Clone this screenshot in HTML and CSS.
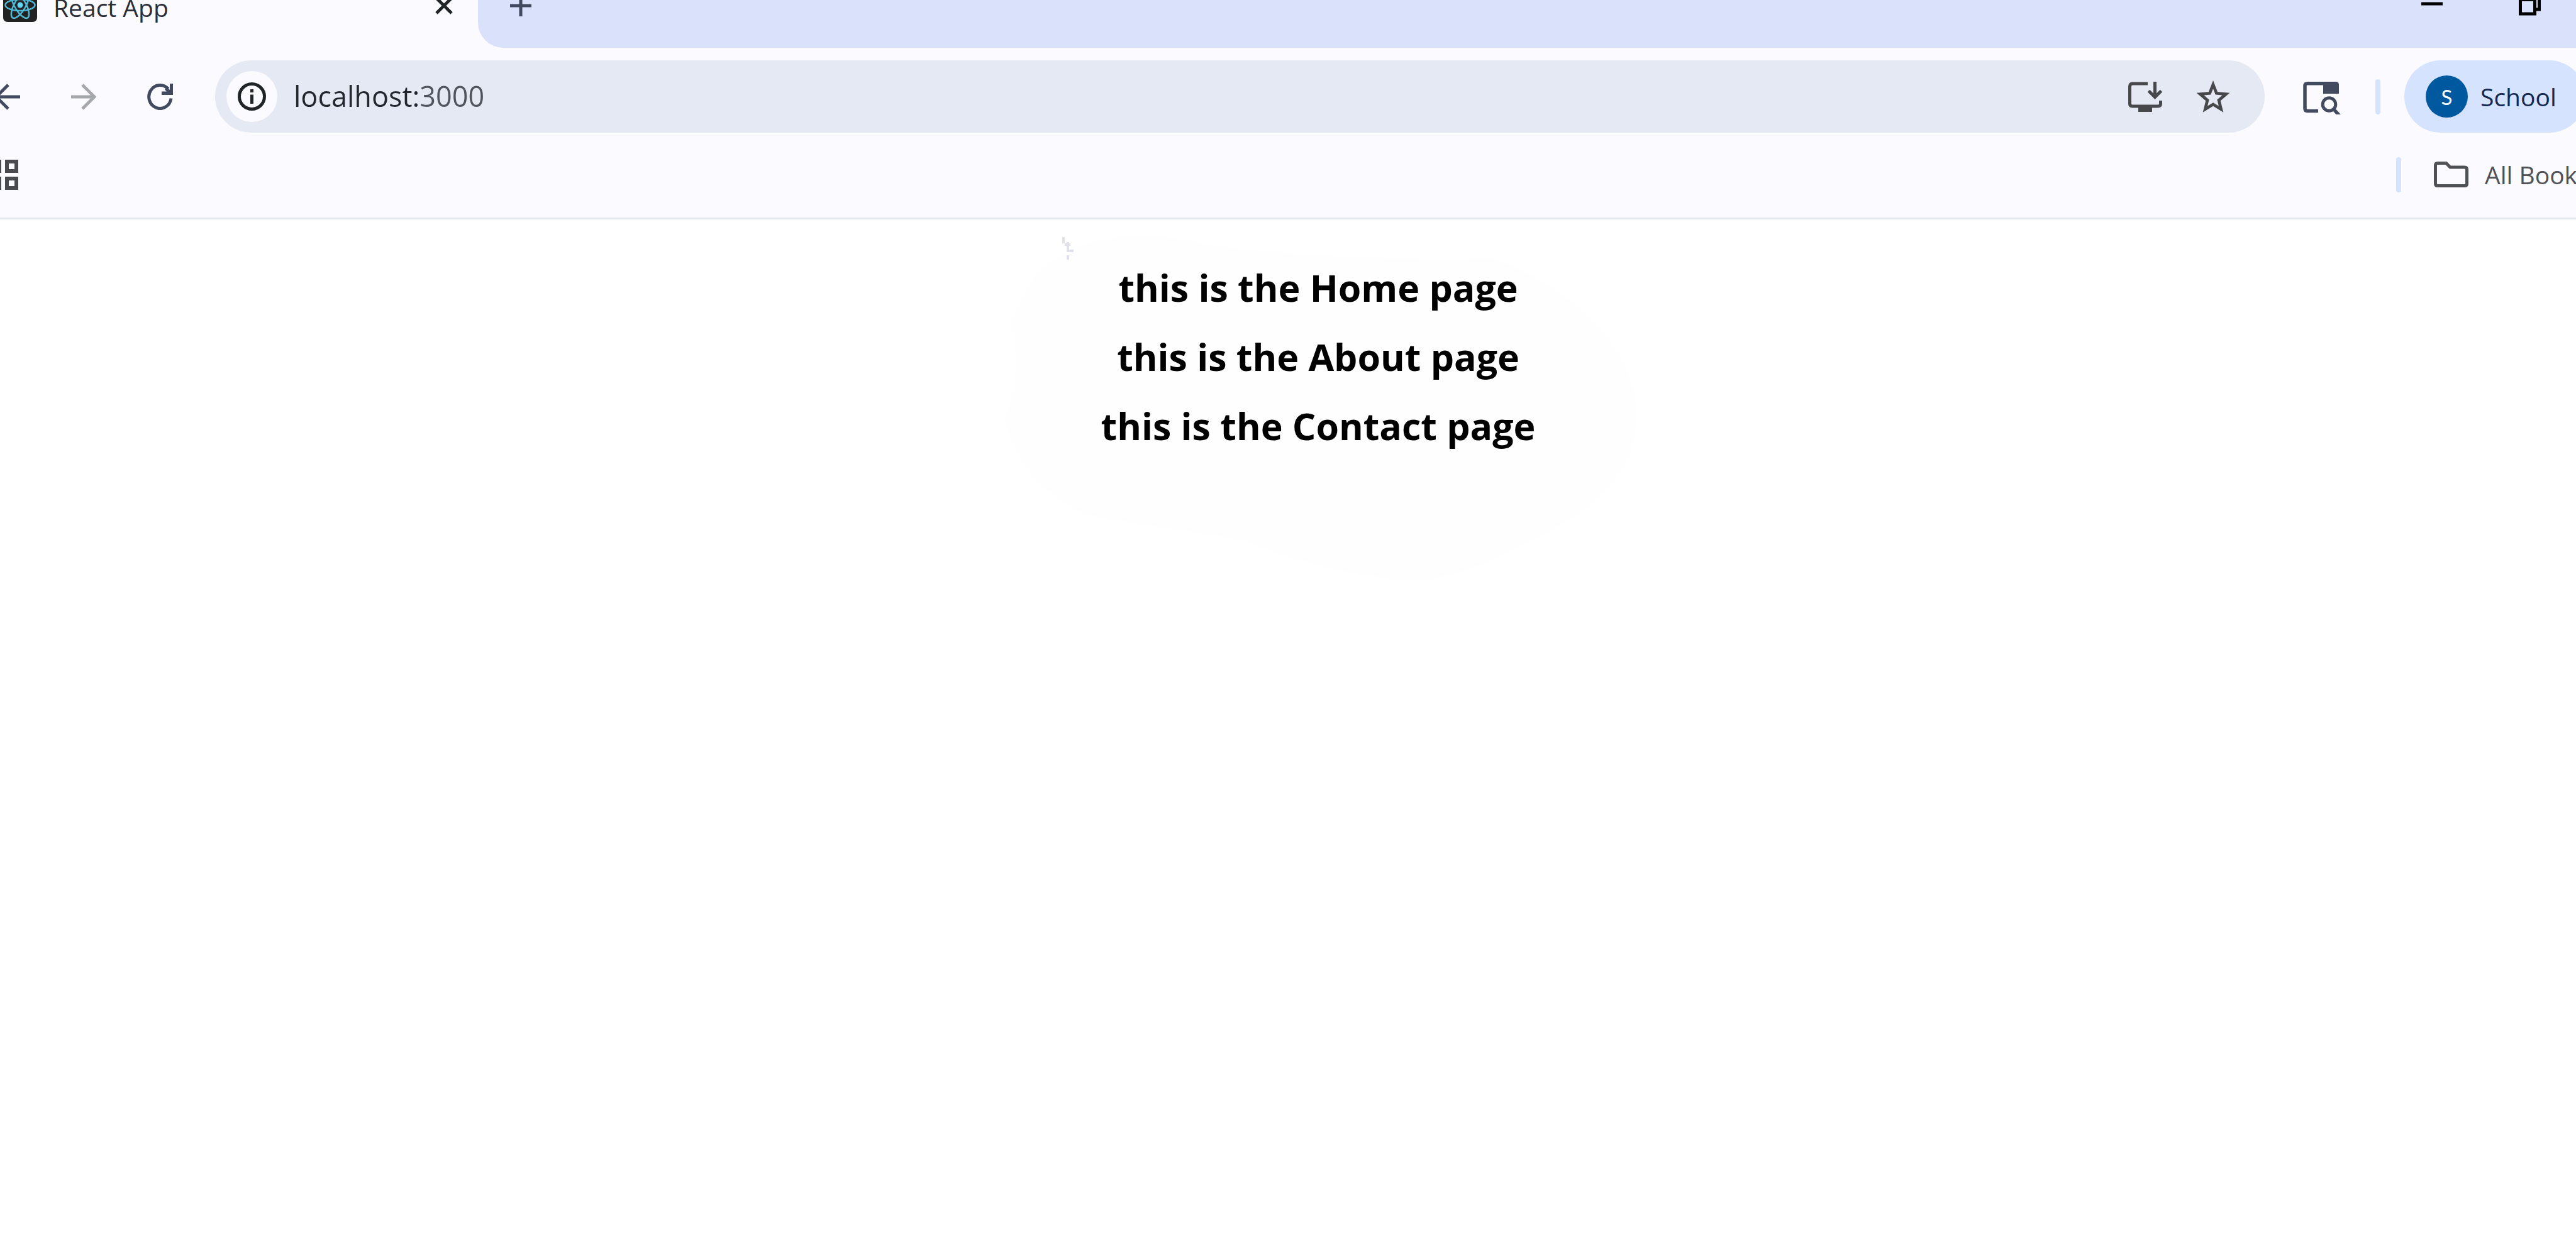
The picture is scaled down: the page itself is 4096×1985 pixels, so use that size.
FILE: index.html
```html
<!DOCTYPE html>
<html lang="en">
<head>
<meta charset="utf-8">
<title>React App</title>
<link rel="stylesheet" href="styles.css">
</head>
<body>
<header class="browser">
  <div class="tabstrip">
    <div class="tab">
      <svg class="favicon" width="54" height="35" viewBox="0 19 54 35" aria-hidden="true">
        <rect width="54" height="54" rx="7" fill="#222"/>
        <g fill="none" stroke="#4fb8d6" stroke-width="2.5">
          <ellipse cx="27" cy="27" rx="23.500" ry="9"/>
          <ellipse cx="27" cy="27" rx="23.500" ry="9" transform="rotate(60 27 27)"/>
          <ellipse cx="27" cy="27" rx="23.500" ry="9" transform="rotate(120 27 27)"/>
        </g>
        <circle cx="27" cy="27" r="4.500" fill="#61dafb"/>
      </svg>
      <span class="tab-title">React App</span>
      <button class="icon-button" aria-label="Close tab">
        <svg width="28" height="24" viewBox="0 0 28 24"><path d="M2-4 26 20M26-4 2 20" transform="translate(0 1)" stroke="#202327" stroke-width="5" fill="none"/></svg>
      </button>
    </div>
    <div class="strip">
      <button class="icon-button" aria-label="New tab">
        <svg width="34" height="26" viewBox="0 0 34 26"><path d="M0 9H34M17-8V26" stroke="#414a5e" stroke-width="5" fill="none"/></svg>
      </button>
      <div class="window-controls">
        <button class="icon-button" aria-label="Minimize">
          <svg width="34" height="26" viewBox="0 0 34 26"><path d="M0 6H34" stroke="#000" stroke-width="5"/></svg>
        </button>
        <button class="icon-button" aria-label="Restore">
          <svg width="35" height="26" viewBox="0 0 35 26"><g fill="none" stroke="#000" stroke-width="5"><path d="M2.500-1V22H25.500V-1M0-.5H28"/><path d="M32.500-4V15H26"/></g></svg>
        </button>
      </div>
    </div>
  </div>

  <nav class="toolbar" aria-label="Navigation">
    <button class="icon-button back" aria-label="Back">
      <svg width="32" height="42" viewBox="9 0 32 42"><path d="M41 22H3M22 3 3 22 22 41" transform="translate(0 -1)" fill="none" stroke="#414a5e" stroke-width="5"/></svg>
    </button>
    <button class="icon-button forward" aria-label="Forward">
      <svg width="40" height="42" viewBox="0 0 40 42"><path d="M0 21H37M18 2 37 21 18 40" fill="none" stroke="#a6a7aa" stroke-width="5"/></svg>
    </button>
    <button class="icon-button reload" aria-label="Reload">
      <svg width="41" height="42" viewBox="0 0 41 42"><path d="M38 23.500A17.700 18.500 0 1 1 33.500 8.500" fill="none" stroke="#414a5e" stroke-width="5"/><path d="M36 0H41V18H23V12.500H31L28 9.500 31 6 36 10Z" fill="#414a5e"/></svg>
    </button>
    <div class="address">
      <button class="site-info" aria-label="Site information">
        <svg width="45" height="45" viewBox="0 0 45 45"><circle cx="22.500" cy="22.500" r="20" fill="none" stroke="#202327" stroke-width="5"/><path d="M20 19.500H25V34H20ZM20 11H25V16H20Z" fill="#202327"/></svg>
      </button>
      <input class="url" type="text" value="localhost:3000" aria-label="Address">
      <button class="icon-button" aria-label="Install app">
        <svg width="54" height="50" viewBox="0 0 54 50"><g fill="none" stroke="#47484b" stroke-width="5"><path d="M31 4H7Q2.500 4 2.500 8.500V36Q2.500 40 7 40H47Q51.500 40 51.500 36V31"/><path d="M42.500 1V27M32.500 15.500 42.500 25.500 52.500 15.500"/></g><path d="M16 40H38V49H16Z" fill="#47484b"/></svg>
      </button>
      <button class="icon-button star" aria-label="Bookmark this tab">
        <svg width="54" height="52" viewBox="0 0 54 52"><path d="M27 6.500 32.400 20.300 47.500 21.600 36.100 31.300 39.600 45.600 27 38 14.400 45.600 17.900 31.300 6.500 21.600 21.600 20.300Z" fill="none" stroke="#47484b" stroke-width="4.800"/></svg>
      </button>
    </div>
    <button class="icon-button tab-search" aria-label="Search tabs">
      <svg width="60" height="52" viewBox="0 0 60 52"><path d="M24 46.500H7Q3 46.500 3 42.500V6.500Q3 2.800 7 2.800H50" fill="none" stroke="#414a5e" stroke-width="5.500"/><path d="M32 0H52Q57 0 57 5V19H32Z" fill="#414a5e"/><circle cx="41.500" cy="36" r="10.300" fill="none" stroke="#414a5e" stroke-width="5"/><path d="M48 43 58 54" stroke="#414a5e" stroke-width="5.500"/></svg>
    </button>
    <span class="divider"></span>
    <button class="profile"><span class="avatar">S</span>School</button>
  </nav>

  <div class="bookmarks">
    <button class="icon-button" aria-label="Apps">
      <svg width="29" height="48" viewBox="0 0 29 48"><g fill="none" stroke="#4a4b4f" stroke-width="6"><path d="M11 3H26V18H11ZM11 30H26V45H11Z"/><path d="M-16 3H-1V18H-16ZM-16 30H-1V45H-16Z"/></g></svg>
    </button>
    <div class="all">
      <span class="divider"></span>
      <button class="folder">
        <svg width="55" height="41" viewBox="0 0 55 41"><path d="M6 2.500H19.500L26 9H49Q52.500 9 52.500 12.500V35Q52.500 38.500 49 38.500H6Q2.500 38.500 2.500 35V6Q2.500 2.500 6 2.500Z" fill="none" stroke="#505155" stroke-width="5"/></svg>
        <span>All Bookmarks</span>
      </button>
    </div>
  </div>
</header>

<main class="page">
  <svg class="backdrop" width="1010" height="570" viewBox="0 0 1010 570" aria-hidden="true">
    <path d="M100 35Q190-10 330 25Q520 50 780 45Q960 120 1000 250Q1030 380 900 460Q740 560 640 560Q500 545 380 495L130 455Q20 400 0 300Q30 230 10 150Q40 60 100 35Z" fill="#fefefe"/>
    <path d="M94 12V22M101 20V34M96 24H105M99 34H110M101 41V48" stroke="#e0e1ea" stroke-width="4" fill="none"/>
  </svg>
  <h1>this is the Home page</h1>
  <h1>this is the About page</h1>
  <h1>this is the Contact page</h1>
</main>
</body>
</html>
```
FILE: styles.css
```css
* { box-sizing: border-box; }

body {
  margin: 0;
  min-height: 100vh;
  background: #fff;
  font-family: "Open Sans", "Noto Sans", sans-serif;
  overflow-x: hidden;
}

button {
  margin: 0;
  padding: 0;
  border: 0;
  background: none;
  font: inherit;
  color: inherit;
}

svg { display: block; }

.icon-button { flex: none; }

.browser {
  background: #fbfaff;
  border-bottom: 3px solid #e3e6f0;
  overflow: hidden;
}

/* Tab strip */
.tabstrip {
  display: flex;
  height: 76px;
}

.tab {
  display: flex;
  align-items: flex-start;
  width: 760px;
  padding: 0 40px 0 5px;
}

.tab-title {
  flex: 1;
  margin-top: -14px;
  padding-left: 26px;
  font-size: 39px;
  line-height: 52px;
  color: #2b2e35;
}

.strip {
  flex: 1;
  display: flex;
  align-items: flex-start;
  justify-content: space-between;
  padding: 0 56px 0 51px;
  border-bottom-left-radius: 40px;
  background: #dae1fa;
}

.window-controls {
  display: flex;
  gap: 121px;
}

/* Toolbar */
.toolbar {
  display: flex;
  align-items: center;
  padding-top: 20px;
}

.forward,
.reload { margin-left: 81px; }

.address {
  flex: 1;
  display: flex;
  align-items: center;
  height: 115px;
  margin-left: 67px;
  padding: 0 55px 0 18px;
  border-radius: 58px;
  background: #e5e9f3;
}

.site-info {
  flex: none;
  display: grid;
  place-items: center;
  width: 81px;
  height: 81px;
  border-radius: 50%;
  background: #fbfaff;
}

.url {
  flex: 1;
  min-width: 0;
  height: 78px;
  margin: 0 0 0 26px;
  padding: 0 0 2px;
  border: 0;
  outline: 0;
  font: inherit;
  font-size: 45px;
  color: #23262c;
  background: linear-gradient(90deg, #23262c 200px, #50545c 200px);
  -webkit-background-clip: text;
  background-clip: text;
  -webkit-text-fill-color: transparent;
}

.star { margin-left: 54px; }

.tab-search { margin: 4px 55px 0 61px; }

.divider {
  flex: none;
  width: 8px;
  height: 56px;
  border-radius: 4px;
  background: #d5e3ff;
}

.profile {
  flex: none;
  display: flex;
  align-items: center;
  gap: 20px;
  width: 288px;
  height: 115px;
  margin: 0 -15px 0 38px;
  padding-left: 34px;
  border-radius: 58px;
  background: #d5e3ff;
  font-size: 39px;
  color: #14294f;
}

.avatar {
  display: grid;
  place-items: center;
  width: 67px;
  height: 67px;
  border-radius: 50%;
  background: #00589f;
  font-family: Lato, sans-serif;
  font-size: 33px;
  color: #fff;
}

/* Bookmarks bar */
.bookmarks {
  display: flex;
  align-items: center;
  justify-content: space-between;
  height: 135px;
  padding-bottom: 2px;
}

.all {
  display: flex;
  align-items: center;
  gap: 52px;
  width: 286px;
}

.folder {
  flex: none;
  display: flex;
  align-items: center;
  gap: 26px;
  font-size: 39px;
  line-height: 52px;
  color: #505155;
  white-space: nowrap;
}

/* Page content */
.page {
  position: relative;
  padding: 53px 0 0 96px;
  text-align: center;
}

.backdrop {
  position: absolute;
  top: 16px;
  left: 39%;
}

h1 {
  position: relative;
  margin: 0;
  font-size: 59px;
  font-weight: 700;
  line-height: 110px;
  color: #000;
}
```
